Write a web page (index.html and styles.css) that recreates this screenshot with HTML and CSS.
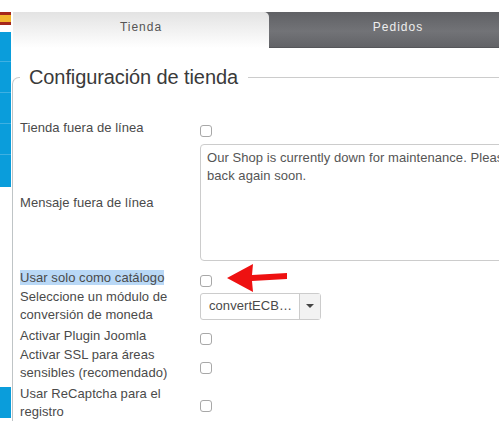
FILE: index.html
```html
<!DOCTYPE html>
<html lang="en">
<head>
    <meta charset="UTF-8">
    <title>Configuración de tienda</title>
    <link rel="stylesheet" href="styles.css">
</head>
<body>
    <div class="page">
        <aside class="sidebar">
            <div class="flag"></div>
            <div class="menu"><i></i><i></i><i></i><i></i><i></i></div>
            <div class="menu-end"></div>
        </aside>
        <main class="content">
            <div class="tabs">
                <div class="tab active">Tienda</div>
                <div class="tab other">Pedidos</div>
            </div>
            <fieldset class="panel">
                <legend>Configuración de tienda</legend>
                <div class="row row-first">
                    <label>Tienda fuera de línea</label>
                    <span class="check"></span>
                </div>
                <div class="row row-message">
                    <label>Mensaje fuera de línea</label>
                    <div class="textarea">Our Shop is currently down for maintenance. Please check back again soon.</div>
                </div>
                <div class="row row-catalog">
                    <label><mark>Usar solo como catálogo</mark></label>
                    <span class="check"></span>
                    <!-- arrow drawn on top of the screenshot -->
                    <svg class="arrow" width="64" height="32" viewBox="0 0 64 32">
                        <path d="M1 16 L27 2 L26 13 L61 11 L61 17 L26 19 L27 30 Z" fill="#ee1111"/>
                    </svg>
                </div>
                <div class="row row-currency">
                    <label>Seleccione un módulo de conversión de moneda</label>
                    <div class="select">
                        <span class="select-value">convertECB…</span>
                        <span class="select-btn"><b></b></span>
                    </div>
                </div>
                <div class="row row-plugin">
                    <label>Activar Plugin Joomla</label>
                    <span class="check"></span>
                </div>
                <div class="row row-ssl">
                    <label>Activar SSL para áreas sensibles (recomendado)</label>
                    <span class="check"></span>
                </div>
                <div class="row row-captcha">
                    <label>Usar ReCaptcha para el registro</label>
                    <span class="check check-high"></span>
                </div>
            </fieldset>
        </main>
    </div>
</body>
</html>
```

FILE: styles.css
```css
* {
    box-sizing: border-box;
    margin: 0;
    padding: 0;
}

body {
    width: 499px;
    height: 423px;
    overflow: hidden;
    background-color: #ffffff;
    font-family: 'Liberation Sans', Arial, sans-serif;
    color: #444;
}

.page {
    display: flex;
    height: 423px;
}

.sidebar {
    width: 12px;
    flex: none;
    padding: 12px 1px 0 0;
}

.flag {
    height: 13px;
    background: linear-gradient(#a5271b 0 3px, #f2b52e 3px 10px, #a5271b 10px);
}

.menu {
    margin-top: 7px;
}

.menu i {
    display: block;
    height: 31px;
    background-color: #0a9ddb;
    border-bottom: 1px solid #3fb0e2;
}

.menu i:first-child {
    height: 30px;
}

.menu i:last-child {
    height: 32px;
    border-bottom: none;
}

.menu-end {
    height: 31px;
    margin-top: 200px;
    background-color: #0a9ddb;
}

.content {
    flex: 1;
    min-width: 0;
    overflow: hidden;
}

.tabs {
    display: flex;
    margin: 12px 0 0 1px;
    height: 36px;
}

.tab {
    padding-top: 8px;
    text-align: center;
    font-size: 12px;
    letter-spacing: 1px;
}

.tab.active {
    position: relative;
    width: 256px;
    flex: none;
    background: linear-gradient(#e3e3e3, #ffffff);
    border-top-right-radius: 5px;
    color: #555;
}

.tab.other {
    width: 264px;
    flex: none;
    margin-left: -6px;
    padding-left: 6px;
    background: linear-gradient(#606165, #727377 55%, #626367);
    border-bottom: 1px solid #55565a;
    color: #eee;
}

.panel {
    width: 700px;
    margin-top: 17px;
    padding: 0 0 0 7px;
    border: none;
    border-top: 1px solid #ccc;
    border-left: 1px solid #bfc4c6;
    border-top-left-radius: 7px;
}

.panel legend {
    padding: 0 10px 0 9px;
    font-size: 20px;
    line-height: 24px;
    letter-spacing: -0.1px;
    color: #3a3a3a;
}

.row {
    position: relative;
    display: flex;
    align-items: center;
    font-size: 13px;
    line-height: 18px;
    letter-spacing: 0.06px;
    color: #4a4a4a;
}

.row label {
    width: 180px;
    flex: none;
}

.row-first label,
.row-catalog label,
.row-plugin label {
    padding-top: 2px;
}

.row-first {
    height: 20px;
    margin-top: 28px;
}

.row-message {
    height: 117px;
    margin-top: 7px;
}

.row-catalog {
    height: 18px;
    margin-top: 7px;
}

.row-currency {
    height: 36px;
    margin-top: 2px;
}

.row-plugin {
    height: 20px;
    margin-top: 1px;
}

.row-ssl {
    height: 36px;
    margin-top: 1px;
}

.row-captcha {
    height: 36px;
    margin-top: 3px;
}

.check {
    width: 12px;
    height: 12px;
    margin-top: 8px;
    border: 1px solid #a8a8a8;
    border-radius: 3px;
    background-color: #fff;
}

.check-high {
    margin-top: 6px;
}

.textarea {
    width: 385px;
    height: 117px;
    padding: 4px 6px;
    border: 1px solid #ccc;
    border-radius: 4px;
    font-size: 13px;
    line-height: 18px;
    color: #555;
}

mark {
    background-color: #b9d8f6;
    color: #4a4a4a;
}

.arrow {
    position: absolute;
    left: 206px;
    top: -6px;
}

.select {
    display: flex;
    width: 121px;
    height: 27px;
    border: 1px solid #ccc;
    border-radius: 3px;
    font-size: 13px;
    color: #4a4a4a;
}

.select-value {
    flex: 1;
    padding: 3px 0 0 8px;
    white-space: nowrap;
}

.select-btn {
    width: 21px;
    flex: none;
    display: flex;
    align-items: center;
    justify-content: center;
    border-left: 1px solid #ccc;
    background-color: #f2f2f2;
}

.select-btn b {
    border-top: 4px solid #444;
    border-left: 4px solid transparent;
    border-right: 4px solid transparent;
}
```
